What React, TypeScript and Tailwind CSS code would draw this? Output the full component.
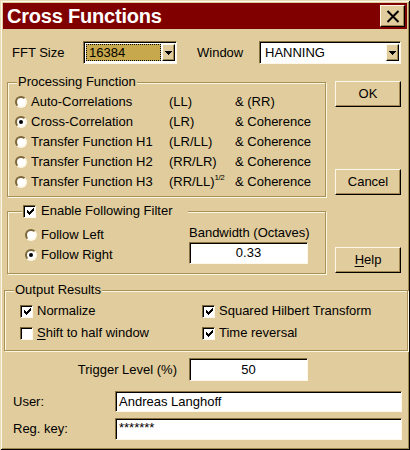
import React from "react";

const FACE = "bg-[#e0cc9c]";

function Radio({ checked }: { checked?: boolean }) {
  return (
    <span className="w-[12px] h-[12px] rounded-full bg-white border-2 border-t-[#7a6638] border-l-[#7a6638] border-r-[#fff8e8] border-b-[#fff8e8] shrink-0 flex items-center justify-center">
      {checked && <span className="w-[4px] h-[4px] rounded-full bg-black" />}
    </span>
  );
}

function Check({ checked }: { checked?: boolean }) {
  return (
    <span className="w-[13px] h-[13px] bg-white border border-t-[#7a6638] border-l-[#7a6638] border-r-[#fff8e8] border-b-[#fff8e8] shadow-[inset_1px_1px_0_#000] shrink-0 flex items-center justify-center">
      {checked && (
        <svg width="7" height="7" viewBox="0 0 7 7" shapeRendering="crispEdges" className="ml-[1px] mt-[1px]">
          <path d="M0 2h1v3h-1z M1 3h1v3h-1z M2 4h1v3h-1z M3 3h1v3h-1z M4 2h1v3h-1z M5 1h1v3h-1z M6 0h1v3h-1z" fill="#000" />
        </svg>
      )}
    </span>
  );
}

function Arrow() {
  return (
    <svg width="7" height="4" viewBox="0 0 7 4" shapeRendering="crispEdges">
      <path d="M0 0h7v1h-7z M1 1h5v1h-5z M2 2h3v1h-3z M3 3h1v1h-1z" fill="#000" />
    </svg>
  );
}

function DropBtn() {
  return (
    <span className={`w-[13px] h-full ${FACE} border border-t-[#fff8e8] border-l-[#fff8e8] border-r-black border-b-black shadow-[inset_-1px_-1px_0_#a08850] flex items-center justify-center shrink-0`}>
      <Arrow />
    </span>
  );
}

function Sunken({ className, children }: { className?: string; children?: React.ReactNode }) {
  return (
    <div
      className={`border border-t-[#8a7040] border-l-[#8a7040] border-r-[#fff8e8] border-b-[#fff8e8] shadow-[inset_1px_1px_0_#000] ${className ?? ""}`}
    >
      {children}
    </div>
  );
}

function Button({ children, className }: { children: React.ReactNode; className?: string }) {
  return (
    <div
      className={`h-[26px] w-[66px] ${FACE} border border-t-[#fff8e8] border-l-[#fff8e8] border-r-black border-b-black shadow-[inset_-1px_-1px_0_#a08850] flex items-center justify-center ${className ?? ""}`}
    >
      {children}
    </div>
  );
}

function Group({
  legend,
  className,
  children,
  legendLeft,
}: {
  legend: React.ReactNode;
  className?: string;
  children: React.ReactNode;
  legendLeft: string;
}) {
  return (
    <div
      className={`relative border border-[#a89058] shadow-[1px_1px_0_#fff8e0,inset_1px_1px_0_#fff8e0] ${className ?? ""}`}
    >
      <div className={`absolute top-[-9px] ${legendLeft} px-[1px] ${FACE} leading-[16px] flex items-center`}>{legend}</div>
      {children}
    </div>
  );
}

const procRows: [string, React.ReactNode, string, boolean][] = [
  ["Auto-Correlations", "(LL)", "& (RR)", false],
  ["Cross-Correlation", "(LR)", "& Coherence", true],
  ["Transfer Function H1", "(LR/LL)", "& Coherence", false],
  ["Transfer Function H2", "(RR/LR)", "& Coherence", false],
  [
    "Transfer Function H3",
    <span key="h3" className="inline-flex items-start">
      (RR/LL)<span className="text-[8px] leading-[8px] tracking-[-0.5px]">1/2</span>
    </span>,
    "& Coherence",
    false,
  ],
];

export default function App() {
  return (
    <div
      className={`w-[410px] h-[450px] ${FACE} text-black text-[13px] leading-[16px] flex flex-col shadow-[inset_1px_1px_0_#e8dcb8,inset_-1px_-1px_0_#000,inset_2px_2px_0_#fff8e8,inset_-2px_-2px_0_#a08850] overflow-hidden`}
      style={{ fontFamily: '"Liberation Sans", Arial, sans-serif' }}
    >
      {/* Title bar */}
      <div className="mt-[3px] mx-[3px] h-[26px] bg-[#800000] flex items-center justify-between pl-[4px] pr-[2px]">
        <span className="text-white font-bold text-[20px] leading-[26px] tracking-[-0.2px]">Cross Functions</span>
        <span className={`w-[25px] h-[22px] ${FACE} border border-t-[#fff8e8] border-l-[#fff8e8] border-r-black border-b-black shadow-[inset_-1px_-1px_0_#a08850] flex items-center justify-center`}>
          <svg width="14" height="13" viewBox="0 0 14 13">
            <path d="M1.5 1 L12.5 12 M12.5 1 L1.5 12" stroke="#000" strokeWidth="2" fill="none" />
          </svg>
        </span>
      </div>

      {/* FFT row */}
      <div className="mt-[12px] h-[23px] flex items-center">
        <span className="ml-[12px] w-[71px]">FFT Size</span>
        <Sunken className="w-[94px] h-[23px] bg-white flex items-stretch p-[2px] pr-[1px]">
          <div className="flex-1 bg-[#c8a84c] border border-dotted border-black flex items-center pl-[2px] mr-[1px]">16384</div>
          <DropBtn />
        </Sunken>
        <span className="ml-[20px] w-[62px]">Window</span>
        <Sunken className="w-[142px] h-[23px] bg-white flex items-stretch p-[2px] pr-[1px]">
          <div className="flex-1 flex items-center pl-[3px]">HANNING</div>
          <DropBtn />
        </Sunken>
      </div>

      {/* Main */}
      <div className="mt-[17px] flex">
        <div className="ml-[7px] w-[319px] flex flex-col">
          <Group legend={<span>Processing Function</span>} legendLeft="left-[9px]" className="mt-[1px] pt-[9px] pb-[4px] pl-[7px]">
            {procRows.map(([a, b, c, sel], i) => (
              <div key={i} className="h-[20px] flex items-center">
                <Radio checked={sel} />
                <span className="ml-[4px] w-[138px]">{a}</span>
                <span className="w-[66px]">{b}</span>
                <span>{c}</span>
              </div>
            ))}
          </Group>
          <Group
            legend={
              <>
                <Check checked />
                <span className="ml-[5px] pr-[14px]">Enable Following Filter</span>
              </>
            }
            legendLeft="left-[14px]"
            className="mt-[14px] h-[63px] pt-[12px] flex"
          >
            <div className="w-[181px] pl-[17px] mt-[1px] flex flex-col">
              <div className="h-[20px] flex items-center">
                <Radio />
                <span className="ml-[4px]">Follow Left</span>
              </div>
              <div className="h-[20px] flex items-center">
                <Radio checked />
                <span className="ml-[4px]">Follow Right</span>
              </div>
            </div>
            <div className="flex flex-col">
              <span className="h-[18px] leading-[18px]">Bandwidth (Octaves)</span>
              <Sunken className="w-[119px] h-[22px] bg-white flex items-center justify-center">0.33</Sunken>
            </div>
          </Group>
        </div>
        <div className="ml-[9px] flex flex-col">
          <Button>OK</Button>
          <Button className="mt-[62px]">Cancel</Button>
          <Button className="mt-[52px]">
            <span>
              <span className="underline underline-offset-2">H</span>elp
            </span>
          </Button>
        </div>
      </div>

      {/* Output results */}
      <Group legend={<span>Output Results</span>} legendLeft="left-[9px]" className="ml-[4px] w-[404px] mt-[16px] pt-[9px] pb-[6px] pl-[15px]">
        <div className="grid grid-cols-[182px_1fr]">
          <div className="h-[22px] flex items-center">
            <Check checked />
            <span className="ml-[4px]">Normalize</span>
          </div>
          <div className="h-[22px] flex items-center">
            <Check checked />
            <span className="ml-[4px]">Squared Hilbert Transform</span>
          </div>
          <div className="h-[22px] flex items-center">
            <Check />
            <span className="ml-[4px]">
              <span className="underline underline-offset-2">S</span>hift to half window
            </span>
          </div>
          <div className="h-[22px] flex items-center">
            <Check checked />
            <span className="ml-[4px]">Time reversal</span>
          </div>
        </div>
      </Group>

      {/* Trigger */}
      <div className="mt-[7px] h-[23px] flex items-center">
        <span className="w-[177px] text-right">Trigger Level (%)</span>
        <Sunken className="ml-[12px] w-[119px] h-[23px] bg-white flex items-center justify-center">50</Sunken>
      </div>

      {/* User */}
      <div className="mt-[10px] h-[21px] flex items-center">
        <span className="ml-[13px] w-[102px]">User:</span>
        <Sunken className="w-[287px] h-[21px] bg-white flex items-center pl-[3px]">Andreas Langhoff</Sunken>
      </div>
      <div className="mt-[6px] h-[22px] flex items-center">
        <span className="ml-[13px] w-[102px]">Reg. key:</span>
        <Sunken className="w-[287px] h-[22px] bg-white flex items-start pl-[3px] pt-[1px]">*******</Sunken>
      </div>
    </div>
  );
}
